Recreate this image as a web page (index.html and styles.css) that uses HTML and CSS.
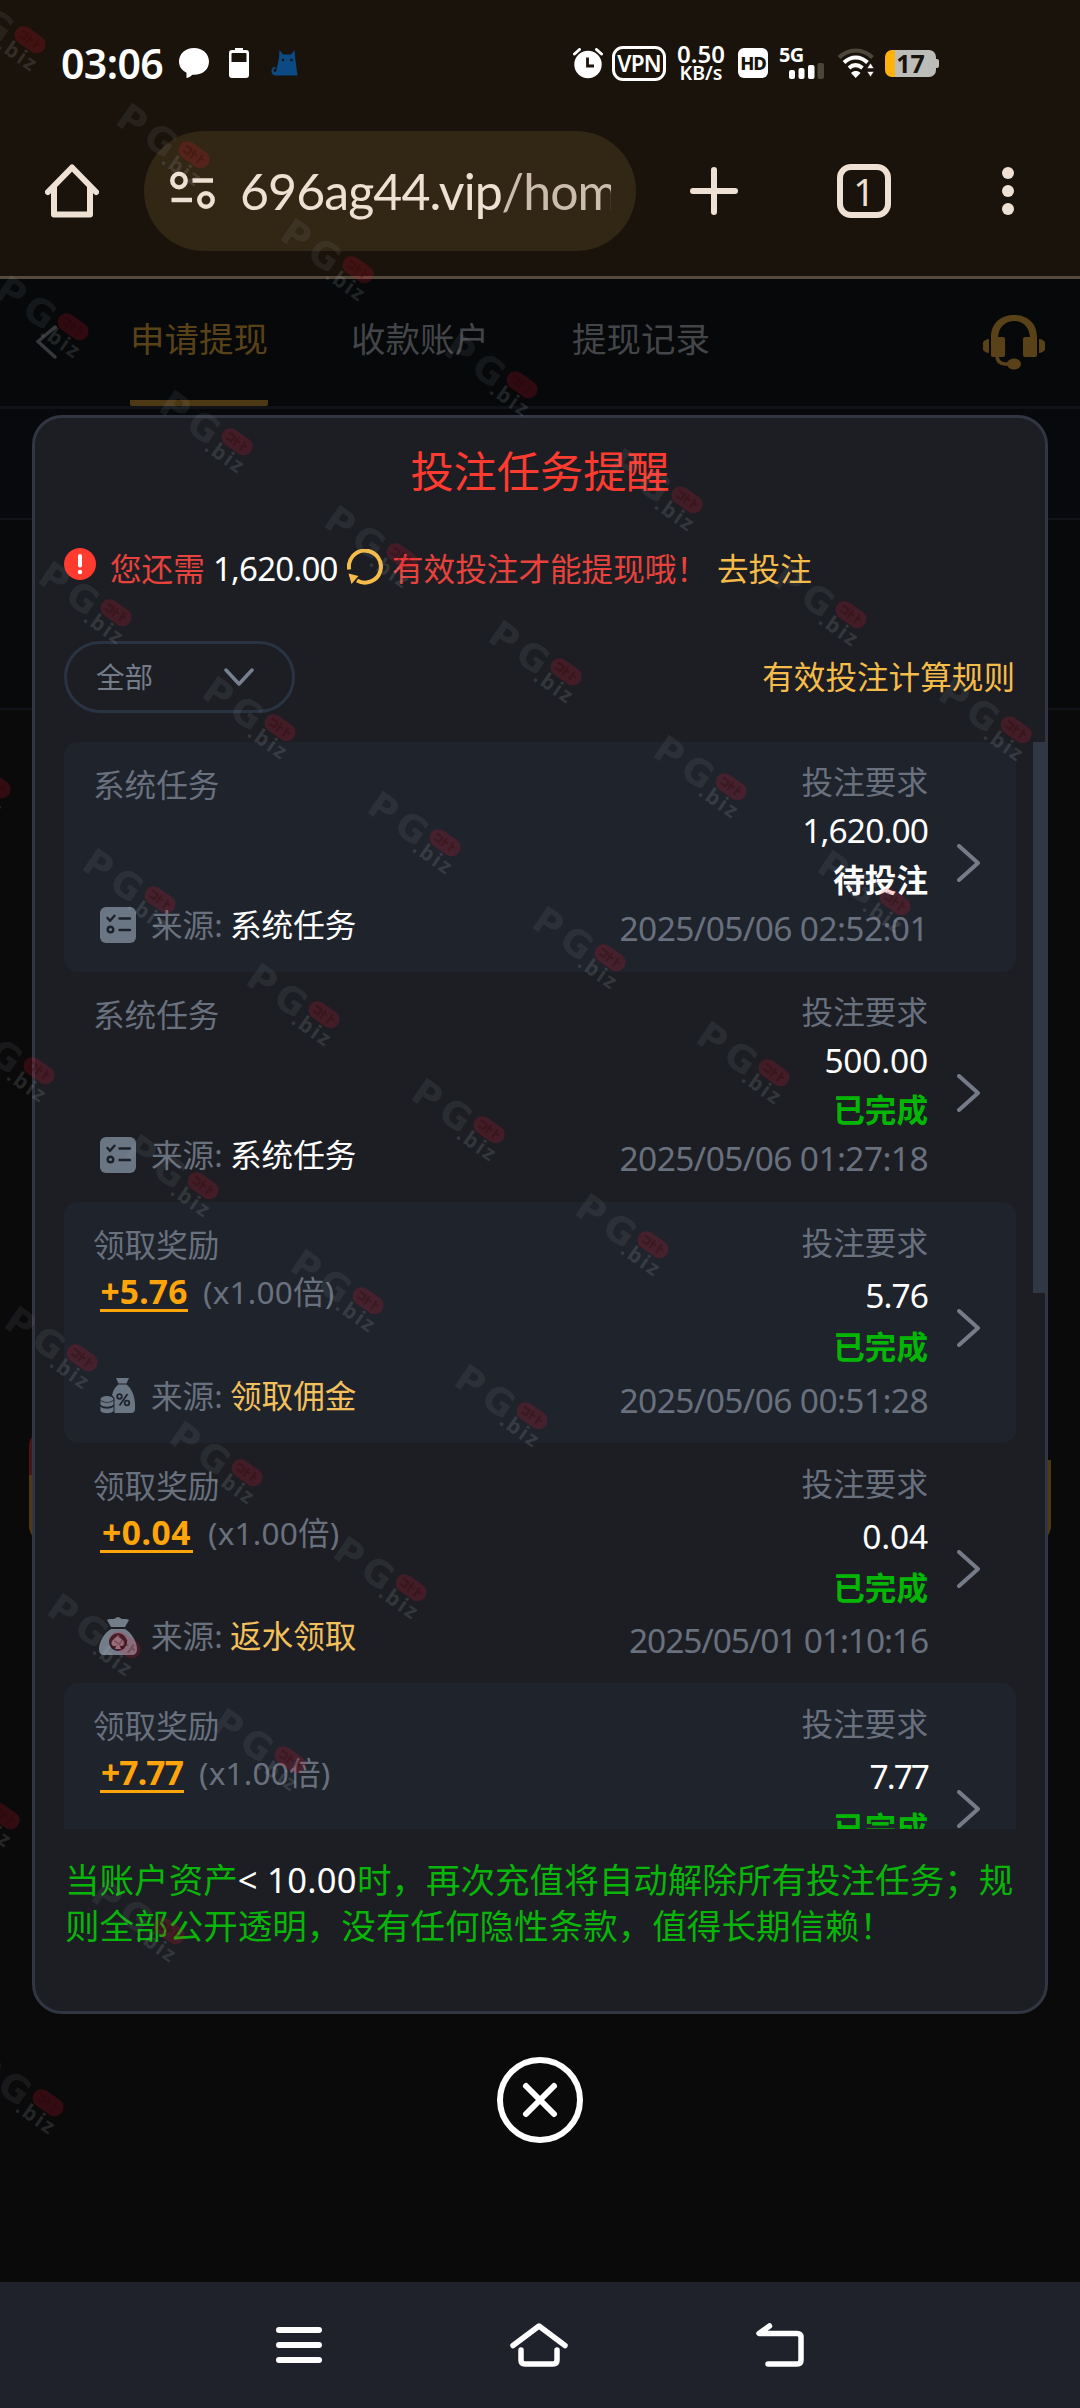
FILE: index.html
```html
<!DOCTYPE html>
<html lang="zh-CN">
<head>
<meta charset="utf-8">
<title>投注任务提醒</title>
<link rel="stylesheet" href="styles.css">
</head>
<body>
<svg class="defs" width="0" height="0" aria-hidden="true">
  <symbol id="chevron" viewBox="0 0 24 38"><path d="M2 2 21 19 2 36" fill="none" stroke="#757b88" stroke-width="4" stroke-linecap="round" stroke-linejoin="round"/></symbol>
  <symbol id="list-icon" viewBox="0 0 36 36"><rect width="36" height="36" rx="6" fill="#6b7685"/><g fill="none" stroke="#1c2029" stroke-width="2.4" stroke-linecap="round"><path d="m7.500 11 2.500 2.700 4.500-5M19.500 11.500h10.500M19.500 23h10.500"/><circle cx="10.500" cy="22.500" r="2.800"/></g></symbol>
</svg>

<header class="status-bar">
  <div class="status-left">
    <span class="clock">03:06</span>
    <svg class="ic-chat" width="30" height="30" viewBox="0 0 30 30"><path d="M15 0C6.500 0 0 5.800 0 13.500c0 5 3 9 7.500 11.300V30c3-.3 4-2 6-3.200C23 27.500 30 21.800 30 13.500 30 5.800 23.500 0 15 0Z" fill="#fff"/></svg>
    <svg class="ic-cell" width="20" height="30" viewBox="0 0 20 30"><path d="M6 0h8v2h3a3 3 0 0 1 3 3v22a3 3 0 0 1-3 3H3a3 3 0 0 1-3-3V5a3 3 0 0 1 3-3h3Z" fill="#fff"/><path d="M2.500 6a1 1 0 0 1 1-1h13a1 1 0 0 1 1 1v8h-15Z" fill="#1a130b"/></svg>
    <svg class="ic-cat" width="27" height="26" viewBox="0 0 27 26"><path d="M8.500 0 12 4.500h8L23.500 0l.7 8L26.500 25.500H5C-1 25.500-.5 17 3.500 17c1.600 0 1.800 2 .2 2-2 0-1.500 3.500 1.300 2.800L8 8Z" fill="#0b4a83"/><circle cx="12" cy="10" r="1.300" fill="#1a130b"/><circle cx="20.500" cy="10" r="1.300" fill="#1a130b"/></svg>
  </div>
  <div class="status-right">
    <svg width="30" height="31" viewBox="0 0 30 31"><circle cx="15" cy="16.500" r="13.700" fill="#fff"/><path d="M1.500 6 6.500 1.500M28.500 6l-5-4.500" stroke="#fff" stroke-width="3" stroke-linecap="round"/><path d="M14.500 9.500V18h6.500" fill="none" stroke="#1a130b" stroke-width="2.800"/></svg>
    <span class="vpn">VPN</span>
    <span class="speed"><span class="speed-value">0.50</span><span class="speed-unit">KB/s</span></span>
    <span class="hd">HD</span>
    <span class="cellular"><span class="net">5G</span>
      <svg width="36" height="16" viewBox="0 0 36 16"><g fill="#fff"><rect y="7" width="6" height="9" rx="2"/><rect x="9.500" y="5" width="6" height="11" rx="2"/><rect x="19" y="2" width="6.500" height="14" rx="2"/></g><rect x="28.500" width="6.500" height="16" rx="2" fill="#4b4438"/></svg>
    </span>
    <svg class="ic-wifi" width="38" height="30" viewBox="0 0 38 30"><g fill="none" stroke-width="4"><path d="M2 9.500C11.500 0 26 0 35.500 9.500" stroke="#4d463b"/><path d="M7 14.500c7-6.700 16.500-6.700 23.500 0M12 20c4-3.600 9-3.600 13.500 0" stroke="#fff"/></g><path d="M14 25c3-2.600 6.700-2.600 9.500 0L18.700 30Z" fill="#fff"/><path d="M30 20.500 33.500 15l3.500 5.500ZM30 23.500h7L33.500 29Z" fill="#fff" stroke="#1a130b" stroke-width=".6"/></svg>
    <span class="battery"><span class="battery-level">17</span></span>
  </div>
</header>

<nav class="browser-bar">
  <svg width="54" height="54" viewBox="0 0 54 54"><path d="M3 28 27 3.500 51 28M9 22.500V50.500h36V22.500" fill="none" stroke="#efe0d4" stroke-width="6" stroke-linecap="round" stroke-linejoin="round"/></svg>
  <div class="address">
    <svg width="45" height="39" viewBox="0 0 45 39"><g fill="none" stroke="#efe0d4" stroke-width="4.500"><circle cx="9" cy="9.500" r="6.700"/><circle cx="36" cy="29" r="6.700"/><path d="M22.500 9.500H43M1.500 29H22"/></g></svg>
    <span class="url">696ag44.vip<span class="path">/hom</span></span>
  </div>
  <svg class="ic-plus" width="48" height="48" viewBox="0 0 48 48"><path d="M24 3v42M3 24h42" stroke="#efe0d4" stroke-width="6" stroke-linecap="round"/></svg>
  <span class="tab-count">1</span>
  <svg class="ic-more" width="12" height="50" viewBox="0 0 12 50"><g fill="#efe0d4"><circle cx="6" cy="7" r="6"/><circle cx="6" cy="25" r="6"/><circle cx="6" cy="43" r="6"/></g></svg>
</nav>

<main class="page">
  <div class="page-tabs">
    <svg class="back" width="21" height="34" viewBox="0 0 21 34"><path d="M19 2 2 16.500 19 32" fill="none" stroke="#37393d" stroke-width="3.500" stroke-linecap="round"/></svg>
    <span class="tab tab-active">申请提现</span>
    <span class="tab">收款账户</span>
    <span class="tab">提现记录</span>
    <svg class="support" width="62" height="55" viewBox="0 0 62 55"><g fill="#5a4218"><path d="M8 22C8 8 18 0 31 0s23 8 23 22v18a2 2 0 0 1-2 2H42a2 2 0 0 1-2-2V24a2 2 0 0 1 2-2h5C46 11 39 6 31 6S16 11 15 22h5a2 2 0 0 1 2 2v16a2 2 0 0 1-2 2H10a2 2 0 0 1-2-2Z"/><path d="M6 24v14a7 7 0 0 1 0-14ZM56 24v14a7 7 0 0 0 0-14Z"/><ellipse cx="31" cy="49" rx="7" ry="5.500"/></g><path d="M14 41c0 5 3 7.500 8 8h6" fill="none" stroke="#5a4218" stroke-width="3.500"/></svg>
  </div>
  <div class="row-balance"></div>
  <div class="row-account"></div>
  <div class="submit"></div>

  <div class="overlay">
    <section class="modal">
      <h1>投注任务提醒</h1>
      <div class="notice">
        <svg width="32" height="32" viewBox="0 0 32 32"><circle cx="16" cy="16" r="16" fill="#ff3b30"/><path d="M16 8v9.500" stroke="#fff" stroke-width="4" stroke-linecap="round"/><circle cx="16" cy="24" r="2.200" fill="#fff"/></svg>
        <span class="need">您还需</span>
        <span class="need-amount">1,620.00</span>
        <svg class="refresh" width="36" height="36" viewBox="0 0 36 36"><path d="M2.200 20.500A16 16 0 1 1 10 31.500" fill="none" stroke="#f6bc49" stroke-width="4"/><path d="m1.500 24.500 10 2.500-7 8Z" fill="#f6bc49"/></svg>
        <span class="need-tail">有效投注才能提现哦！</span>
        <span class="go-bet">去投注</span>
      </div>
      <div class="filters">
        <div class="select">全部<svg width="30" height="18" viewBox="0 0 30 18"><path d="m2 2 13 14L28 2" fill="none" stroke="#788090" stroke-width="3.500" stroke-linecap="round" stroke-linejoin="round"/></svg></div>
        <span class="rules">有效投注计算规则</span>
      </div>
      <div class="list">
        <div class="cards">
          <article class="card card-alt">
            <div class="left"><span class="kind">系统任务</span>
              <span class="source"><svg width="36" height="36"><use href="#list-icon"/></svg><span class="label">来源:</span><b>系统任务</b></span></div>
            <div class="right"><span>投注要求</span><span class="amount amount-tight">1,620.00</span><span class="state pending">待投注</span><time>2025/05/06 02:52:01</time></div>
            <svg class="arrow" width="24" height="38"><use href="#chevron"/></svg>
          </article>
          <article class="card">
            <div class="left"><span class="kind">系统任务</span>
              <span class="source"><svg width="36" height="36"><use href="#list-icon"/></svg><span class="label">来源:</span><b>系统任务</b></span></div>
            <div class="right"><span>投注要求</span><span class="amount">500.00</span><span class="state">已完成</span><time>2025/05/06 01:27:18</time></div>
            <svg class="arrow" width="24" height="38"><use href="#chevron"/></svg>
          </article>
          <article class="card card-tall card-alt">
            <div class="left"><span class="kind">领取奖励</span>
              <span class="reward"><b>+5.76</b><span>(x1.00倍)</span></span>
              <span class="source"><svg width="36" height="36" viewBox="0 0 36 36"><g fill="#6b7685"><path d="M16 0h13l-2.500 5.500h-8ZM18.500 6.500h8C31 10 35 17 35 27v4a4 4 0 0 1-4 4H14.500V20L12 17c1.500-5 3-8 6.500-10.500Z"/><ellipse cx="7" cy="21" rx="6.500" ry="3"/><path d="M.5 22.500c2.500 3 10.500 3 13 0v4c-2.500 3-10.500 3-13 0ZM.5 28.500c2.500 3 10.500 3 13 0V33c-2.500 3-10.500 3-13 0Z"/></g><g fill="none" stroke="#1e232d" stroke-width="1.800"><circle cx="19.500" cy="18.500" r="2.300"/><circle cx="27" cy="25" r="2.300"/><path d="m27.500 16-8 11.500"/></g></svg><span class="label">来源:</span><b class="gold">领取佣金</b></span></div>
            <div class="right"><span>投注要求</span><span class="amount amount-tight">5.76</span><span class="state">已完成</span><time>2025/05/06 00:51:28</time></div>
            <svg class="arrow" width="24" height="38"><use href="#chevron"/></svg>
          </article>
          <article class="card card-tall">
            <div class="left"><span class="kind">领取奖励</span>
              <span class="reward"><b class="wide">+0.04</b><span>(x1.00倍)</span></span>
              <span class="source"><svg class="bag" width="38" height="38" viewBox="0 0 38 38"><g fill="#737c89"><path d="M8 3c3-2 6 0 8-1.500 2-2 4-2 6 0C24 3 27 1 30 3l-4 7H12ZM12 12h14c7 4 12 13 12 20 0 4-2 6-5 6H5c-3 0-5-2-5-6 0-7 5-16 12-20Z"/></g><circle cx="19" cy="25" r="9" fill="#251d27"/><path d="M19 17.500c2 3.500 6.500 5.500 6.500 9 0 2.500-3.500 3.500-5 1.500l1.500 4h-6l1.500-4c-1.500 2-5 1-5-1.500 0-3.500 4.500-5.500 6.500-9Z" fill="#87808c"/></svg><span class="label">来源:</span><b class="gold">返水领取</b></span></div>
            <div class="right"><span>投注要求</span><span class="amount">0.04</span><span class="state">已完成</span><time class="narrow">2025/05/01 01:10:16</time></div>
            <svg class="arrow" width="24" height="38"><use href="#chevron"/></svg>
          </article>
          <article class="card card-tall card-alt">
            <div class="left"><span class="kind">领取奖励</span>
              <span class="reward"><b class="tight">+7.77</b><span>(x1.00倍)</span></span></div>
            <div class="right"><span>投注要求</span><span class="amount amount-sevens">7.77</span><span class="state">已完成</span></div>
            <svg class="arrow" width="24" height="38"><use href="#chevron"/></svg>
          </article>
        </div>
        <div class="scroll-thumb"></div>
      </div>
      <p class="footnote">当账户资产<span>&lt; 10.00</span>时，再次充值将自动解除所有投注任务；规<br>则全部公开透明，没有任何隐性条款，值得长期信赖！</p>
    </section>
    <svg class="close" width="86" height="86" viewBox="0 0 86 86"><g fill="none" stroke="#fff" stroke-width="6"><circle cx="43" cy="43" r="40"/><path d="m29 29 28 28M57 29 29 57" stroke-linecap="round"/></g></svg>
  </div>
</main>

<footer class="system-nav">
  <svg width="46" height="36" viewBox="0 0 46 36"><path d="M3 3h40M3 18h40M3 33h40" stroke="#fff" stroke-width="6" stroke-linecap="round"/></svg>
  <svg width="58" height="44" viewBox="0 0 58 44"><path d="M3 22.500 29 3l26 19.500M11 27v10q0 4 4 4h28q4 0 4-4V27" fill="none" stroke="#fff" stroke-width="5.500" stroke-linecap="round" stroke-linejoin="round"/></svg>
  <svg width="48" height="44" viewBox="0 0 48 44"><path d="M13.500 3 3 10.500h38q4 0 4 4V37q0 4-4 4H12" fill="none" stroke="#fff" stroke-width="5.500" stroke-linecap="round" stroke-linejoin="round"/></svg>
</footer>

<svg class="watermarks" width="1080" height="2408" viewBox="0 0 1080 2408" aria-hidden="true">
  <defs>
    <g id="mark" transform="rotate(35)">
      <text class="wm-name" x="-3" y="24">PG</text>
      <rect x="64" y="-5" width="34" height="18" rx="9" fill="#ff1838" fill-opacity=".17"/>
      <path d="M69 1h7v6h-6M80 -1v10M78 3h6M88 -1v10M87 3h5" fill="none" stroke="#200" stroke-opacity=".25" stroke-width="2"/>
      <text class="wm-tld" x="58" y="30">.biz</text>
    </g>
  </defs>
  <use href="#mark" x="-34" y="-10"/><use href="#mark" x="130" y="105"/><use href="#mark" x="294" y="220"/><use href="#mark" x="458" y="335"/><use href="#mark" x="623" y="450"/><use href="#mark" x="787" y="565"/><use href="#mark" x="952" y="680"/>
  <use href="#mark" x="9" y="277"/><use href="#mark" x="173" y="392"/><use href="#mark" x="338" y="507"/><use href="#mark" x="502" y="622"/><use href="#mark" x="667" y="737"/><use href="#mark" x="831" y="852"/>
  <use href="#mark" x="52" y="563"/><use href="#mark" x="216" y="678"/><use href="#mark" x="381" y="793"/><use href="#mark" x="546" y="908"/><use href="#mark" x="710" y="1023"/>
  <use href="#mark" x="-69" y="735"/><use href="#mark" x="96" y="850"/><use href="#mark" x="260" y="965"/><use href="#mark" x="425" y="1080"/><use href="#mark" x="589" y="1195"/>
  <use href="#mark" x="-25" y="1021"/><use href="#mark" x="139" y="1136"/><use href="#mark" x="304" y="1251"/><use href="#mark" x="468" y="1366"/>
  <use href="#mark" x="18" y="1308"/><use href="#mark" x="183" y="1423"/><use href="#mark" x="347" y="1538"/>
  <use href="#mark" x="61" y="1595"/><use href="#mark" x="226" y="1710"/>
  <use href="#mark" x="-60" y="1766"/><use href="#mark" x="105" y="1881"/>
  <use href="#mark" x="-16" y="2053"/>
</svg>
</body>
</html>
```
FILE: styles.css
```css
* { box-sizing: border-box; }
body {
  margin: 0;
  width: 1080px;
  height: 2408px;
  position: relative;
  overflow: hidden;
  display: flex;
  flex-direction: column;
  background: #0a0a0b;
  color: #69707e;
  font-family: "Noto Sans", "Noto Sans CJK SC", sans-serif;
  font-size: 31.6px;
}
svg { display: block; flex: none; }
.defs { position: absolute; }
span, time, h1 { white-space: nowrap; }

/* phone status bar */
.status-bar {
  height: 126px;
  padding: 0 144px 0 61px;
  display: flex;
  justify-content: space-between;
  align-items: center;
  background: #1a130b;
  color: #fff;
}
.status-left, .status-right { display: flex; align-items: center; }
.clock { font-size: 41px; font-weight: 600; line-height: 50px; width: 102px; letter-spacing: -.6px; }
.ic-chat { margin-left: 16px; }
.ic-cell { margin-left: 20px; }
.ic-cat { margin-left: 22px; }
.vpn {
  margin-left: 9px;
  width: 54px;
  height: 35px;
  border: 3px solid #fff;
  border-radius: 11px;
  font-size: 22.5px;
  font-weight: 600;
  line-height: 29px;
  text-align: center;
  letter-spacing: -.8px;
}
.speed { margin-left: 9px; width: 52px; display: flex; flex-direction: column; align-items: center; font-weight: 600; }
.speed-value { font-size: 24px; line-height: 19px; }
.speed-unit { font-size: 19.5px; line-height: 19px; }
.hd {
  margin-left: 11px;
  width: 30px;
  height: 30px;
  border-radius: 6px;
  background: #fff;
  color: #1a130b;
  font-size: 18.5px;
  font-weight: 800;
  line-height: 30px;
  text-align: center;
  letter-spacing: -1.2px;
}
.cellular { margin-left: 11px; width: 46px; height: 32px; display: flex; flex-direction: column; }
.net { font-size: 20px; font-weight: 700; line-height: 16px; letter-spacing: -.8px; }
.cellular svg { margin-left: 10px; }
.ic-wifi { margin-left: 12px; }
.battery {
  margin-left: 10px;
  width: 51px;
  height: 27px;
  border-radius: 7px;
  background: linear-gradient(90deg, #ffb30a 10px, #bcbcb8 10px);
  color: #1a130b;
  position: relative;
}
.battery::after { content: ""; position: absolute; right: -3px; top: 9px; width: 3px; height: 9px; border-radius: 0 2px 2px 0; background: #bcbcb8; }
.battery-level { display: block; font-size: 25px; font-weight: 700; line-height: 27px; text-align: center; }

/* browser toolbar */
.browser-bar {
  height: 153px;
  padding: 6px 66px 27px 45px;
  display: flex;
  align-items: center;
  background: #1a130b;
  border-bottom: 3px solid #544a3d;
}
.address {
  margin-left: 45px;
  width: 492px;
  height: 120px;
  padding: 0 24px 0 26px;
  border-radius: 60px;
  background: #322615;
  display: flex;
  align-items: center;
  gap: 25px;
}
.url { font-family: Lato, sans-serif; font-size: 50px; line-height: 70px; width: 371px; overflow: hidden; color: #efe0d4; letter-spacing: -.9px; }
.path { color: #cbbcae; }
.ic-plus { margin-left: 54px; }
.tab-count {
  margin-left: 99px;
  width: 54px;
  height: 54px;
  border: 6px solid #efe0d4;
  border-radius: 14px;
  color: #efe0d4;
  font-size: 38px;
  line-height: 42px;
  text-align: center;
}
.ic-more { margin-left: 111px; }

/* dimmed withdrawal page */
.page { height: 2003px; position: relative; }
.page-tabs {
  height: 130px;
  padding-left: 36px;
  display: flex;
  background: #06080a;
  border-bottom: 3px solid #101217;
  color: #434549;
}
.back { margin-top: 46px; margin-right: 73px; }
.tab { width: 138px; height: 127px; font-size: 34.5px; line-height: 120px; text-align: center; margin-right: 83px; }
.tab-active { color: #5a4218; border-bottom: 6px solid #4d3814; border-radius: 2px; }
.support { margin-top: 36px; margin-left: 190px; }
.row-balance { height: 111px; background: #07090c; border-bottom: 2px solid #121318; }
.row-account { height: 190px; background: #08090b; border-bottom: 2px solid #121318; }
.submit { margin: 720px 29px 0; height: 112px; border-radius: 16px; background: linear-gradient(90deg, #4a1518 50%, transparent 50%) 0 0 / 100% 45px no-repeat, linear-gradient(#4d3a14, #4d3a14) 0 100% / 100% 82px no-repeat; }

/* reminder dialog */
.overlay { position: absolute; inset: 0; padding-top: 136px; display: flex; flex-direction: column; align-items: center; }
.modal {
  width: 1016px;
  height: 1599px;
  border: 3px solid #323643;
  border-radius: 30px;
  background: #1c1e23;
  display: flex;
  flex-direction: column;
}
h1 { margin: 24px 0 0; font-size: 43.2px; font-weight: 400; line-height: 60px; color: #ff3b30; text-align: center; }
.notice { margin: 43px 0 0 29px; height: 46px; display: flex; line-height: 47px; color: #e8423d; }
.notice > svg { margin-top: 3px; }
.need { margin-left: 14px; width: 103px; }
.need-amount { color: #fff; width: 134px; font-size: 33px; letter-spacing: -.8px; }
.notice .refresh { margin-top: 4px; }
.need-tail { margin-left: 9px; width: 325px; }
.go-bet, .rules { color: #f6bc49; }
.filters { margin: 50px 30px 0 29px; display: flex; justify-content: space-between; line-height: 72px; }
.select {
  width: 231px;
  height: 72px;
  padding: 0 38px 0 29px;
  border: 3px solid #2a3343;
  border-radius: 36px;
  display: flex;
  align-items: center;
  justify-content: space-between;
  font-size: 28.6px;
  color: #747b89;
}

/* task list */
.list { margin: 29px -3px 0 29px; height: 1087px; flex: none; display: flex; justify-content: space-between; overflow: hidden; }
.cards { width: 952px; }
.card { height: 230px; padding: 0 35px 0 29px; border-radius: 14px; display: flex; }
.card-alt { background: #1f232c; }
.card-tall { height: 240.5px; }
.left { flex: 1; padding: 23px 0 27px; display: flex; flex-direction: column; line-height: 40px; }
.reward { margin: 7px 0 0 7px; display: flex; gap: 15px; letter-spacing: .2px; }
.reward b { height: 40px; width: 88px; border-bottom: 3px solid #ffa50a; color: #ffa50a; font-size: 33.5px; font-weight: 700; line-height: 39px; text-align: center; }
.reward b.wide { width: 93px; letter-spacing: .6px; }
.reward b.tight { width: 84px; letter-spacing: -.8px; }
.source { margin: auto 0 0 7px; display: flex; align-items: center; }
.source .label { width: 79px; margin-left: 15px; }
.source .bag { margin: 0 -1px; }
.source b { font-weight: 400; color: #fff; }
.source b.gold { color: #f3c05b; }
.right { padding-top: 15px; display: flex; flex-direction: column; align-items: flex-end; line-height: 49px; }
.card-tall .right { line-height: 52.2px; }
.right time { font-size: 33.5px; letter-spacing: -.6px; }
.right .narrow { letter-spacing: -1.1px; }
.amount { color: #fff; font-size: 33.5px; letter-spacing: -.2px; }
.amount-tight { letter-spacing: -.9px; }
.amount-sevens { letter-spacing: -2px; }
.state { color: #04b604; font-weight: 700; }
.state.pending { color: #fff; }
.arrow { align-self: center; margin: 12px 0 0 29px; }
.scroll-thumb { width: 15px; height: 551px; background: #2f3844; }
.footnote { margin: 28px 0 0 30px; font-size: 34.55px; line-height: 46px; color: #08b508; white-space: nowrap; }
.footnote span { color: #fff; letter-spacing: .3px; }
.close { margin-top: 43px; }

/* system navigation */
.system-nav {
  height: 126px;
  padding: 0 276px;
  display: flex;
  align-items: center;
  justify-content: space-between;
  background: #1f222b;
}

.watermarks { position: absolute; left: 0; top: 0; pointer-events: none; }
.wm-name { font: 700 37px "DejaVu Sans", sans-serif; letter-spacing: 6px; fill: #aab4be; fill-opacity: .11; }
.wm-tld { font: 700 21px "Noto Sans", sans-serif; letter-spacing: 2px; fill: #b4bec8; fill-opacity: .17; }
```
